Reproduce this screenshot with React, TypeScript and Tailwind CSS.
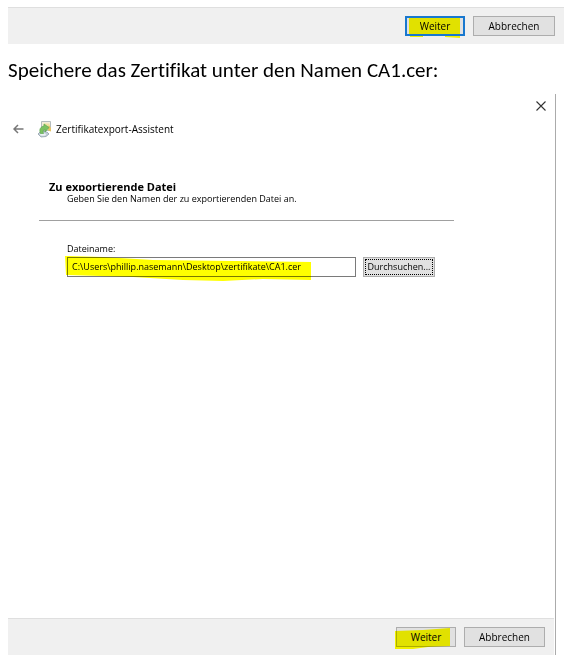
import { useState } from "react";

const buttonBase =
  "h-5 border font-['Open_Sans',sans-serif] text-[10px] leading-4 text-black";

function BackIcon() {
  return (
    <svg width="11" height="10" viewBox="0 0 11 10" fill="none" stroke="#777" strokeWidth="1.5">
      <path d="M10.5 5H1M5 1L1 5l4 4" />
    </svg>
  );
}

function CloseIcon() {
  return (
    <svg width="10" height="10" viewBox="0 0 10 10" fill="none" stroke="#333" strokeWidth="1.1">
      <path d="M0.5 0.5l9 9M9.5 0.5l-9 9" />
    </svg>
  );
}

function CertificateIcon() {
  return (
    <svg width="16" height="18" viewBox="0 0 16 18">
      <path d="M4.5 1.5h9v9h-9z" fill="#f3eedb" stroke="#b4bcbe" />
      <path d="M6.5 3.5h6v3h-6z" fill="#efe0a0" />
      <path d="M10 7l2.5-1.5L14 8v3.5l-3-1z" fill="#e5c467" />
      <path d="M1 14l3-3 6 1 2 2-3 2.5-5 .5z" fill="#c3ced8" stroke="#8796a3" strokeWidth="0.7" />
      <ellipse cx="6" cy="14.5" rx="3" ry="1.3" fill="#eef3f5" />
      <path d="M3.5 13.5C1.5 9 4 6.500 7 6V4l5 3.5L8 12V9.5c-2 .3-2.5 2-1.5 4z" fill="#7cc162" stroke="#56a34b" strokeWidth="0.6" />
    </svg>
  );
}

export default function App() {
  const [fileName, setFileName] = useState(
    "C:\\Users\\phillip.nasemann\\Desktop\\zertifikate\\CA1.cer"
  );

  return (
    <main className="min-h-screen bg-white pl-2 pt-[7px] text-black">
      {/* Footer of the previous dialog */}
      <div className="mr-[10px] flex h-[37px] items-center justify-end gap-2 border-t border-[#dfdfdf] bg-[#f0f0f0] pr-[9px]">
        <button type="button" className={`${buttonBase} relative w-[60px] border-2 border-[#1878cf] bg-[#e1e1e1]`}>
          Weiter
          <svg className="pointer-events-none absolute left-0 top-0 mix-blend-multiply" width="56" height="20" viewBox="0 0 56 20">
            <path d="M2 0H53V16H2zM3 18H16V19H3zM38 18H53V20L38 19z" fill="#ff0" />
          </svg>
        </button>
        <button type="button" className={`${buttonBase} w-[82px] border-[#adadad] bg-[#e1e1e1]`}>
          Abbrechen
        </button>
      </div>

      <p className="mt-[14px] font-[Carlito,Lato,sans-serif] text-[21px] leading-6 [font-variant-ligatures:none]">
        Speichere das Zertifikat unter den Namen CA1.cer:
      </p>

      {/* Export wizard */}
      <section className="mr-[18px] mt-3 border-r border-[#ababab]">
        <div className="flex h-[23px] items-center justify-end pr-[9px]">
          <button type="button" aria-label="Schließen">
            <CloseIcon />
          </button>
        </div>
        <header className="flex h-6 items-center pl-[5px]">
          <button type="button" aria-label="Zurück">
            <BackIcon />
          </button>
          <span className="ml-[13px]">
            <CertificateIcon />
          </span>
          <h1 className="ml-[3px] font-['Open_Sans',sans-serif] text-[10px] leading-4">
            Zertifikatexport-Assistent
          </h1>
        </header>

        <div className="h-[477px] pt-10 font-['Open_Sans',sans-serif] text-[9px]">
          <div className="ml-[31px] mr-[101px] border-b border-[#a0a0a0] pb-[13px] pl-[10px]">
            {/* the heading box is too short for its descenders */}
            <h2 className="h-[10px] overflow-hidden text-[11px] font-bold leading-3">
              Zu exportierende Datei
            </h2>
            <p className="pl-[18px] leading-4">Geben Sie den Namen der zu exportierenden Datei an.</p>
          </div>

          <div className="ml-[59px] mt-5">
            <label htmlFor="file-name" className="block leading-4">
              Dateiname:
            </label>
            <div className="flex gap-[7px]">
              <div className="relative w-[289px]">
                <input
                  id="file-name"
                  type="text"
                  value={fileName}
                  onChange={(e) => setFileName(e.target.value)}
                  className="block h-5 w-full border border-[#7a7a7a] bg-white px-1 pb-[2px]"
                />
                <svg className="pointer-events-none absolute -left-1 -top-1 mix-blend-multiply" width="250" height="30" viewBox="0 0 250 30">
                  <path d="M2 3L40 4 90 7 248 9V27L200 26 160 28 120 27 70 24 3 22z" fill="#ff0" />
                </svg>
              </div>
              <button type="button" className="h-5 w-[72px] border border-[#adadad] bg-[#e1e1e1] p-px">
                <span className="flex h-full items-center justify-center border border-dotted border-black">
                  Durchsuchen...
                </span>
              </button>
            </div>
          </div>
        </div>

        <footer className="mr-px flex h-[37px] items-center justify-end gap-2 border-t border-[#dfdfdf] bg-[#f0f0f0] pr-[9px]">
          <button type="button" className={`${buttonBase} relative w-[60px] border-[#adadad] bg-[#e1e1e1]`}>
            Weiter
            <svg className="pointer-events-none absolute -left-1 top-0 mix-blend-multiply" width="60" height="22" viewBox="0 0 60 22">
              <path d="M2 3L30 2 57 0V18L35 19 20 21H2z" fill="#ff0" />
            </svg>
          </button>
          <button type="button" className={`${buttonBase} w-[81px] border-[#adadad] bg-[#e1e1e1]`}>
            Abbrechen
          </button>
        </footer>
      </section>
    </main>
  );
}
